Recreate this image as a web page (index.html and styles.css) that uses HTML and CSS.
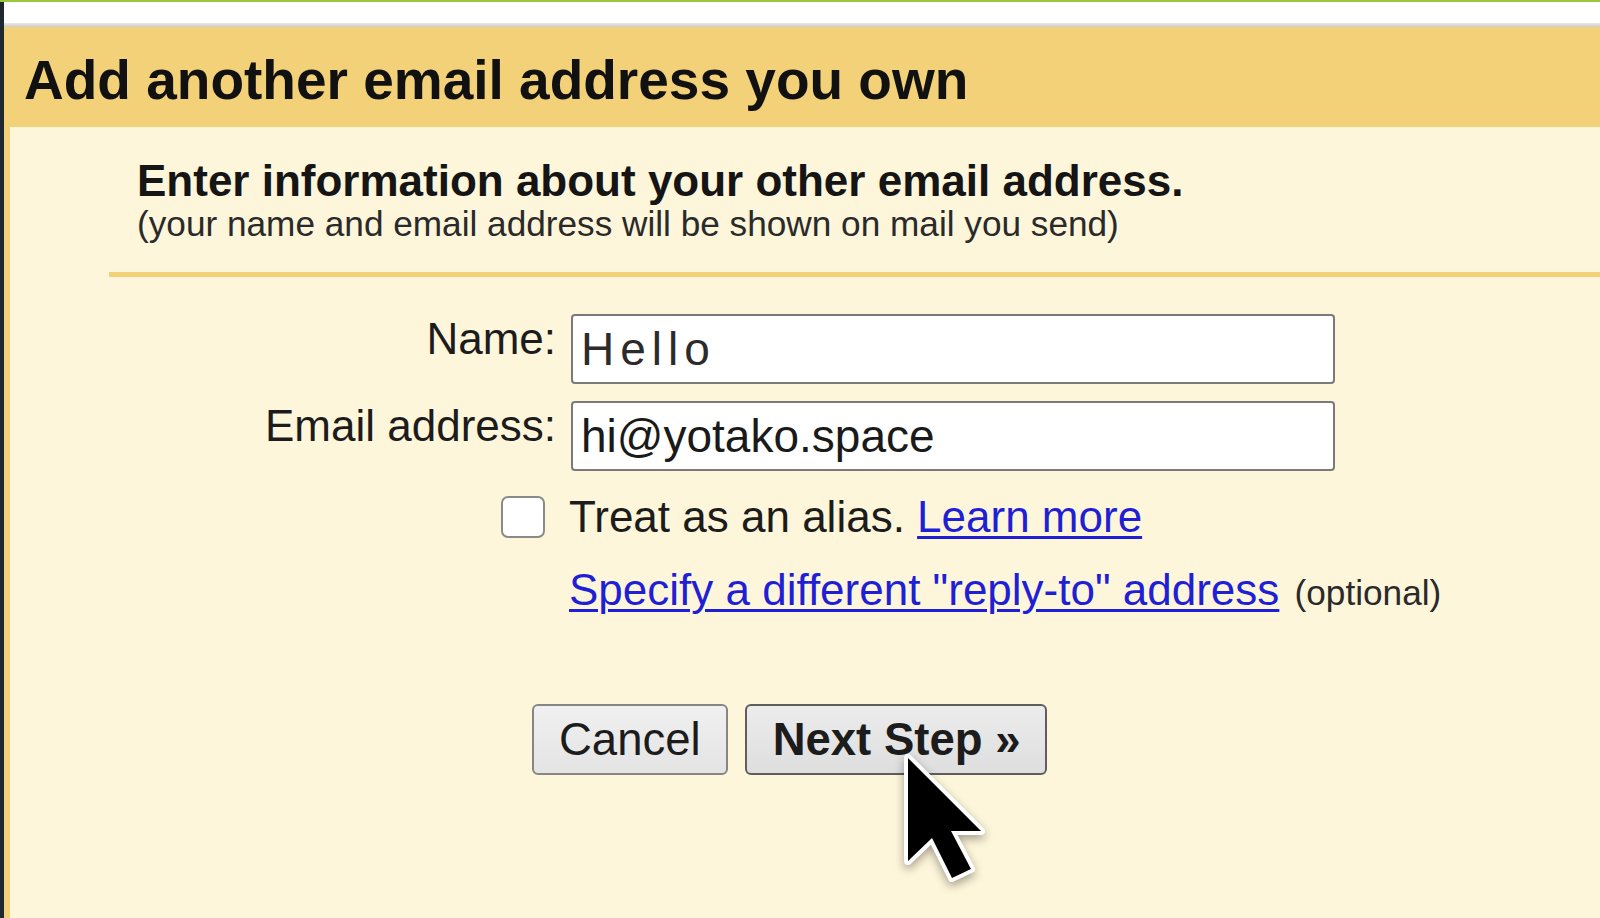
FILE: index.html
```html
<!DOCTYPE html>
<html lang="en">
<head>
<meta charset="utf-8">
<title>Add another email address you own</title>
<link rel="stylesheet" href="styles.css">
</head>
<body>
<div class="topline"></div>
<div class="frame">
  <div class="darkstrip"></div>
  <div class="main">
    <div class="whiteband"></div>
    <div class="shade"></div>
    <header class="header">
      <h1 class="title">Add another email address you own</h1>
    </header>
    <section class="panel">
      <div class="intro">
        <div class="intro-title">Enter information about your other email address.</div>
        <div class="intro-note">(your name and email address will be shown on mail you send)</div>
      </div>
      <div class="divider"></div>
      <form class="form">
        <label class="label" for="name">Name:</label>
        <input class="field field-name" id="name" type="text" value="Hello">
        <label class="label" for="email">Email address:</label>
        <input class="field" id="email" type="text" value="hi@yotako.space">
        <div class="cb-cell"><span class="checkbox"></span></div>
        <div class="alias">Treat as an alias. <a class="link" href="#">Learn more</a></div>
        <div class="empty"></div>
        <div class="reply"><a class="link" href="#">Specify a different "reply-to" address</a> <span class="optional">(optional)</span></div>
      </form>
      <div class="buttons">
        <button class="btn" type="button">Cancel</button>
        <button class="btn btn-primary" type="button">Next Step »</button>
      </div>
    </section>
  </div>
</div>
<svg class="cursor" width="100" height="138" viewBox="-8 -8 100 138" xmlns="http://www.w3.org/2000/svg">
  <path d="M0 0 L0 103 L24 80 L44 120 L63 111 L43 73 L73 73 Z" fill="#000" stroke="#fff" stroke-width="8" stroke-linejoin="round" paint-order="stroke"/>
</svg>
</body>
</html>
```
FILE: styles.css
```css
* { box-sizing: border-box; }

html, body {
  margin: 0;
  padding: 0;
}

body {
  width: 1600px;
  height: 918px;
  overflow: hidden;
  background: #fef6da;
  font-family: "Liberation Sans", Arial, sans-serif;
  color: #1c1c1c;
  position: relative;
}

.topline {
  height: 2px;
  background: #9bc73c;
}

.frame {
  display: flex;
  height: 916px;
}

.darkstrip {
  width: 4px;
  background: #1f282f;
}

.main {
  flex: 1;
  display: flex;
  flex-direction: column;
}

.whiteband {
  height: 21px;
  background: #ffffff;
}

.shade {
  height: 4px;
  background: linear-gradient(#e9e9e9, #cfcbc6);
}

.header {
  height: 100px;
  background: #f3d179;
  padding: 26px 0 0 20px;
}

.title {
  margin: 0;
  font-size: 55px;
  line-height: 55px;
  font-weight: bold;
  color: #111;
}

.panel {
  flex: 1;
  background: #fef6da;
  border-left: 6px solid #f3d179;
}

.intro {
  padding: 32px 0 0 127px;
}

.intro-title {
  font-size: 44px;
  line-height: 44px;
  font-weight: bold;
  color: #151515;
}

.intro-note {
  font-size: 35.2px;
  line-height: 42px;
  color: #2a2a2a;
}

.divider {
  margin: 27px 0 0 99px;
  height: 5px;
  background: #f3d179;
}

.form {
  display: grid;
  grid-template-columns: 546px 764px;
  grid-template-rows: 70px 70px auto auto;
  column-gap: 15px;
  row-gap: 17px;
  margin-top: 37px;
}

.label {
  align-self: start;
  text-align: right;
  font-size: 44px;
  line-height: 50px;
  color: #1c1c1c;
}

.field {
  width: 764px;
  height: 70px;
  margin: 0;
  border: 2px solid #7a7a7a;
  border-radius: 4px;
  background: #fff;
  padding: 0 8px;
  font-family: "Liberation Sans", Arial, sans-serif;
  font-size: 46px;
  color: #1a1a1a;
  outline: none;
}

.field-name {
  letter-spacing: 6px;
  color: #2b2b2b;
}

.cb-cell {
  display: flex;
  justify-content: flex-end;
  align-items: flex-start;
}

.checkbox {
  width: 44px;
  height: 42px;
  margin: 8px 11px 0 0;
  border: 2.5px solid #8a8a8a;
  border-radius: 7px;
  background: #fff;
}

.alias {
  margin: 4px 0 0 -2px;
  font-size: 44px;
  line-height: 50px;
  color: #1c1c1c;
}

.reply {
  margin: 6px 0 0 -2px;
  font-size: 44px;
  line-height: 50px;
  white-space: nowrap;
}

.link {
  color: #1f1fd6;
  text-decoration: underline;
  text-decoration-thickness: 3px;
  text-underline-offset: 4px;
}

.optional {
  font-size: 35.2px;
  color: #2a2a2a;
  margin-left: 3px;
}

.buttons {
  display: flex;
  gap: 17px;
  margin-top: 86px;
  padding-left: 522px;
}

.btn {
  height: 71px;
  padding: 0 25px;
  border: 2px solid #868686;
  border-radius: 6px;
  background: linear-gradient(#f0f0f0, #e4e4e4);
  font-family: "Liberation Sans", Arial, sans-serif;
  font-size: 45.5px;
  color: #1c1c1c;
}

.btn-primary {
  padding: 0 25px 0 26px;
  font-weight: bold;
  border-color: #5e5e5e;
  background: linear-gradient(#ececec, #dedede);
}

.cursor {
  position: absolute;
  left: 900px;
  top: 750px;
  filter: drop-shadow(0 4px 5px rgba(0, 0, 0, 0.35));
}
```
